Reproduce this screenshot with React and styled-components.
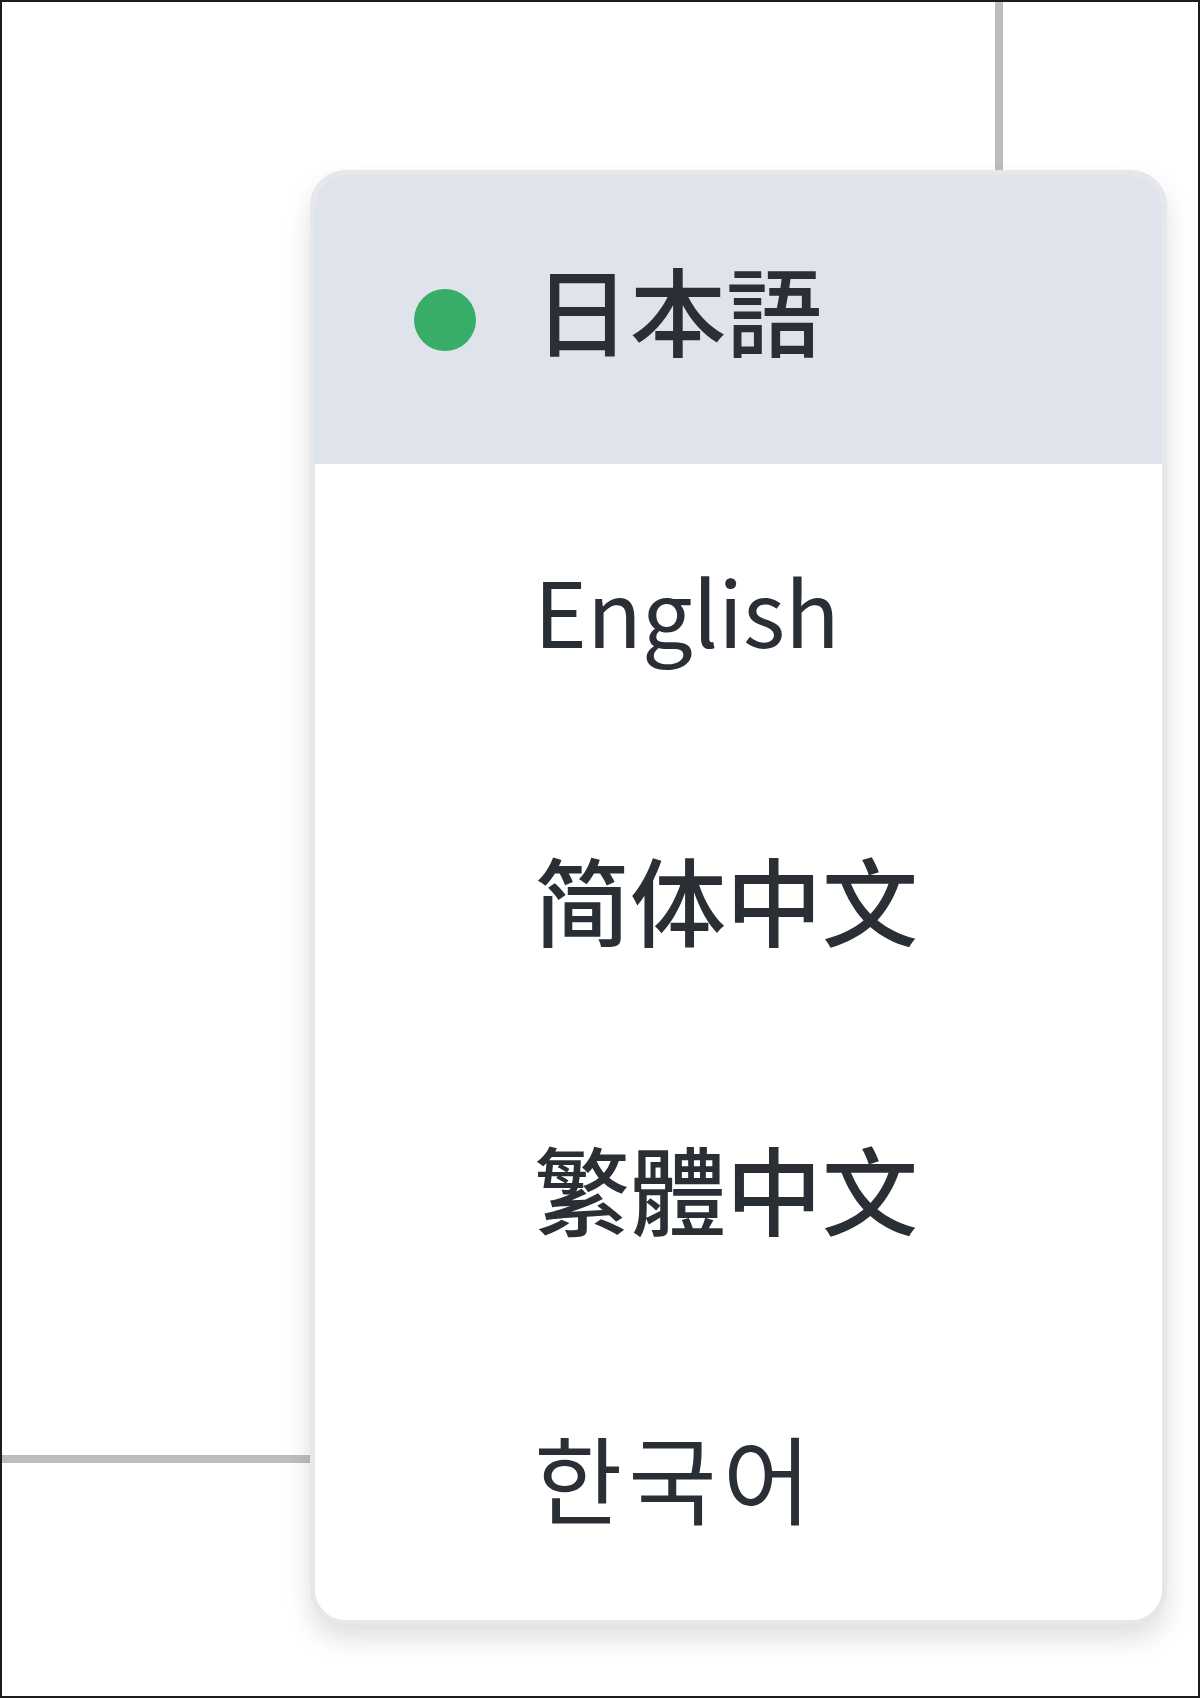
import { createGlobalStyle } from 'styled-components'
import styled from 'styled-components'

const GlobalStyle = createGlobalStyle`
  html, body {
    margin: 0;
    padding: 0;
    background: #ffffff;
  }
  * {
    box-sizing: border-box;
  }
`

const languages = [
  { code: 'ja', label: '日本語', font: 'Noto Sans CJK JP', active: true },
  { code: 'en', label: 'English', font: 'Noto Sans CJK JP', size: 90, weight: 400 },
  { code: 'zh-CN', label: '简体中文', font: 'Noto Sans CJK SC' },
  { code: 'zh-TW', label: '繁體中文', font: 'Noto Sans CJK TC' },
  { code: 'ko', label: '한국어', font: 'Noto Sans CJK KR', weight: 400, spacing: 6 },
]

function App() {
  return (
    <>
      <GlobalStyle />
      <Frame>
        <Backdrop />
        <Menu role="menu">
          {languages.map((item) => (
            <Option key={item.code} $active={item.active} lang={item.code} role="menuitem">
              <Dot $show={item.active} />
              <Label
                $active={item.active}
                $font={item.font}
                $size={item.size || 96}
                $weight={item.weight || 500}
                $spacing={item.spacing || 0}
              >
                {item.label}
              </Label>
            </Option>
          ))}
        </Menu>
      </Frame>
    </>
  )
}

const Frame = styled.div`
  position: relative;
  width: 1200px;
  height: 1698px;
  border: 2px solid #1c1c1c;
  overflow: hidden;
  background: #ffffff;
`

const Backdrop = styled.div`
  width: 1001px;
  height: 1461px;
  border-right: 8px solid #bdbdbd;
  border-bottom: 8px solid #bdbdbd;
`

const Menu = styled.div`
  position: absolute;
  top: 168px;
  left: 308px;
  width: 857px;
  display: flex;
  flex-direction: column;
  background: #ffffff;
  border: 5px solid #e6e7ea;
  border-radius: 36px;
  overflow: hidden;
  box-shadow: 0 14px 26px rgba(0, 0, 0, 0.13);
`

const Option = styled.div`
  height: 289px;
  display: flex;
  align-items: center;
  gap: 58px;
  padding-left: 99px;
  background: ${(p) => (p.$active ? '#dee3ec' : '#ffffff')};
  color: #2a2e35;
`

const Dot = styled.span`
  flex: none;
  width: 62px;
  height: 62px;
  border-radius: 50%;
  background: #38ad68;
  visibility: ${(p) => (p.$show ? 'visible' : 'hidden')};
`

const Label = styled.span`
  margin-bottom: ${(p) => (p.$active ? '24px' : '0')};
  font-family: "${(p) => p.$font}", "Noto Sans", sans-serif;
  font-size: ${(p) => p.$size}px;
  font-weight: ${(p) => p.$weight};
  letter-spacing: ${(p) => p.$spacing}px;
  line-height: 1;
  white-space: nowrap;
`

export default App
